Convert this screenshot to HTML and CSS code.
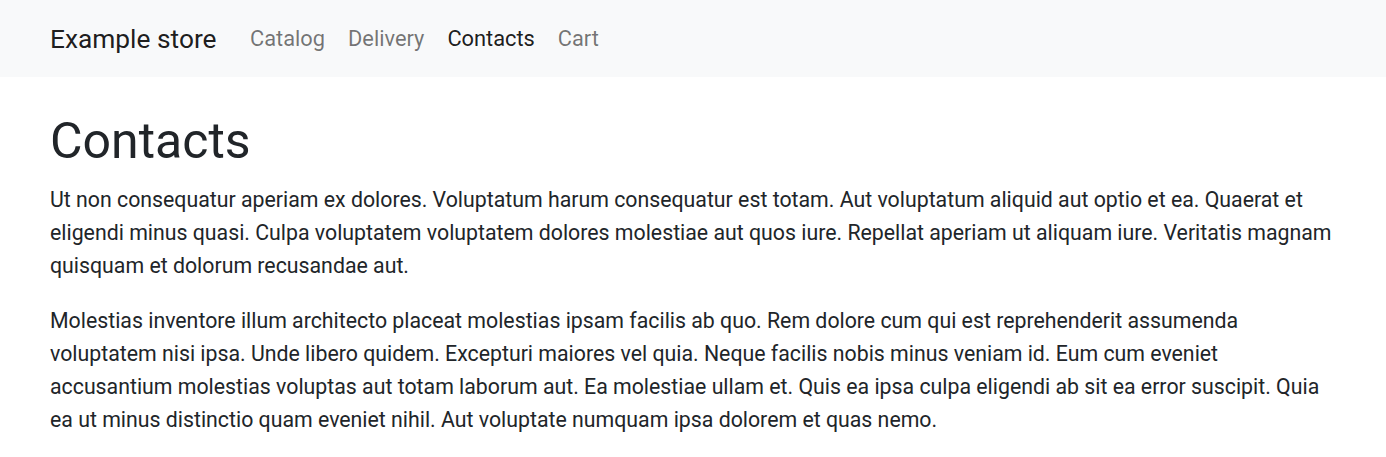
FILE: index.html
```html
<!DOCTYPE html>
<html lang="en">
<head>
<meta charset="utf-8">
<title>Contacts - Example store</title>
<link rel="stylesheet" href="styles.css">
</head>
<body>
<nav class="navbar">
  <a class="brand" href="#">Example store</a>
  <ul class="nav">
    <li><a class="nav-link" href="#">Catalog</a></li>
    <li><a class="nav-link" href="#">Delivery</a></li>
    <li><a class="nav-link active" href="#">Contacts</a></li>
    <li><a class="nav-link" href="#">Cart</a></li>
  </ul>
</nav>
<main class="content">
  <h1 class="title">Contacts</h1>
  <p class="text">Ut non consequatur aperiam ex dolores. Voluptatum harum consequatur est totam. Aut voluptatum aliquid aut optio et ea. Quaerat et eligendi minus quasi. Culpa voluptatem voluptatem dolores molestiae aut quos iure. Repellat aperiam ut aliquam iure. Veritatis magnam quisquam et dolorum recusandae aut.</p>
  <p class="text">Molestias inventore illum architecto placeat molestias ipsam facilis ab quo. Rem dolore cum qui est reprehenderit assumenda voluptatem nisi ipsa. Unde libero quidem. Excepturi maiores vel quia. Neque facilis nobis minus veniam id. Eum cum eveniet accusantium molestias voluptas aut totam laborum aut. Ea molestiae ullam et. Quis ea ipsa culpa eligendi ab sit ea error suscipit. Quia ea ut minus distinctio quam eveniet nihil. Aut voluptate numquam ipsa dolorem et quas nemo.</p>
</main>
</body>
</html>
```
FILE: styles.css
```css
* { box-sizing: border-box; }
html, body { margin: 0; padding: 0; }
body {
  font-family: Roboto, "Liberation Sans", sans-serif;
  font-size: 21.3px;
  line-height: 33px;
  color: #212529;
  background: #fff;
}
.navbar {
  display: flex;
  align-items: center;
  height: 77px;
  padding: 0 50px;
  background: #f8f9fa;
}
.brand {
  font-size: 26.3px;
  color: rgba(0,0,0,0.9);
  text-decoration: none;
  margin-right: 22px;
  line-height: 36px;
}
.nav {
  display: flex;
  list-style: none;
  margin: 0;
  padding: 0;
}
.nav-link {
  display: block;
  padding: 11px 11.5px;
  font-size: 21.8px;
  color: rgba(0,0,0,0.55);
  text-decoration: none;
}
.nav-link.active { color: rgba(0,0,0,0.9); }
.content {
  padding: 31px 50px 0;
}
.title {
  margin: 0 0 9px;
  font-size: 50px;
  font-weight: 400;
  line-height: 66px;
}
.text {
  margin: 0 0 22px;
}
```
